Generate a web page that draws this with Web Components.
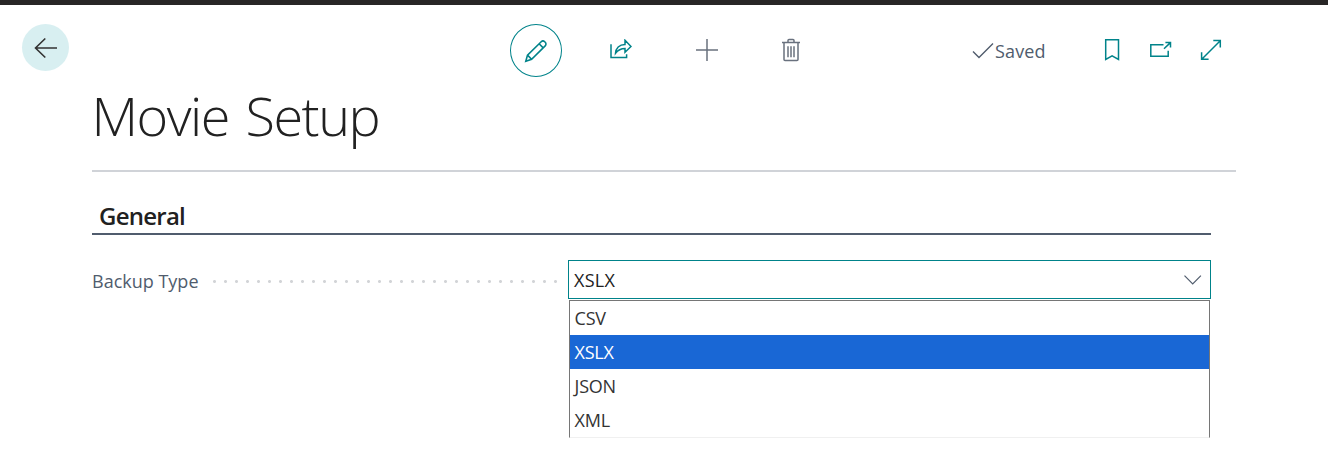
<!DOCTYPE html>
<html lang="en">
<head>
<meta charset="utf-8">
<title>Movie Setup</title>
<style>
html,body{margin:0;height:100%;background:#fff;overflow:hidden}
body{font-family:"Open Sans","Noto Sans",sans-serif;color:#212121}
</style>
</head>
<body>
<setup-page></setup-page>
<script>
const define=(name,html,setup)=>customElements.define(name,class extends HTMLElement{
  connectedCallback(){
    if(this.shadowRoot)return;
    const t=document.createElement('template');t.innerHTML=html;
    this.attachShadow({mode:'open'}).append(t.content.cloneNode(true));
    if(setup)setup(this,this.shadowRoot);
  }
});

const icons={
  back:['24 22','<path d="M11.3 1.5 1.5 11l9.8 9.5M1.8 11H23" stroke-width="1.6"/>'],
  edit:['24 24','<path d="m1.8 22.2 1.7-6.1L17.2 2.7a2.5 2.5 0 0 1 3.5 0l.5.5a2.5 2.5 0 0 1 0 3.6L7.6 20.3zM3.5 16.1l4.1 4.2M15.1 4.8l4.1 4.1" stroke-width="1.6"/>'],
  share:['22 20','<path d="M1 5.2v13.3h15.6v-3.2M5.5 14.4C5.8 9.4 9.2 5.5 15 5.5V1.2l6 6.3-6 5.8V9.6c-4.2 0-7 1.5-9.5 4.8z" stroke-width="1.5"/>'],
  add:['24 24','<path d="M12 1v22M1 12h22" stroke-width="1.5"/>'],
  trash:['20 24','<path d="M1 4.5h18M3 4.5v17q0 1 1 1h12q1 0 1-1v-17M7 4.3V2.5q0-1 1-1h4q1 0 1 1v1.8M7 8.2v11M10 8.2v11M13 8.2v11" stroke-width="1.5"/>'],
  check:['22 18','<path d="m1 9.5 6 6L21 1.5" stroke-width="1.4"/>'],
  bookmark:['16 24','<path d="M1.7 1.8h12.8v19.6l-6.4-3.6-6.4 3.6z" stroke-width="1.5"/>'],
  popout:['24 18','<path d="M14.5 3.7H1.8v11.6h17.4V9.7M15 7.8l5.9-5.7M16.4 1.6h5.1v4.9" stroke-width="1.5"/>'],
  expand:['22 22','<path d="M2 20 20 2M13.3 1.6h7v7M1.6 13.3v7h7" stroke-width="1.5"/>'],
  chevron:['20 12','<path d="m1.5 1.7 8.2 8.2 8.2-8.2" stroke-width="1.2"/>']
};
define('line-icon','<style>:host{display:block;flex:none}svg{display:block;fill:none;stroke:currentColor}</style><svg></svg>',(el,r)=>{
  const [size,paths]=icons[el.getAttribute('name')],[w,h]=size.split(' '),s=r.querySelector('svg');
  s.setAttribute('viewBox','0 0 '+size);s.setAttribute('width',w);s.setAttribute('height',h);s.innerHTML=paths;
});

define('round-button',`<style>:host{display:flex;box-sizing:border-box;flex:none;align-items:center;justify-content:center;border-radius:50%}
:host([kind=back]){width:47px;height:47px;background:#d8eff1;color:#333}
:host([kind=edit]){width:52px;height:53px;border:1px solid #00838a;color:#00838a}</style><slot></slot>`);

define('action-bar',`<style>:host{display:flex;height:87px;box-sizing:border-box;padding:19px 0 0 22px;align-items:flex-start;color:#00838a}
.gray{color:#69717e}.saved{display:flex;align-items:center;color:#505c6d;margin:12px 0 0 171px;height:29px}
.saved span{font-size:18px;line-height:28px;letter-spacing:.15px;margin-left:1px;width:51px}</style>
<round-button kind="back"><line-icon name="back"></line-icon></round-button>
<round-button kind="edit" style="margin-left:441px"><line-icon name="edit"></line-icon></round-button>
<line-icon name="share" style="margin:15px 0 0 48px"></line-icon>
<line-icon class="gray" name="add" style="margin:14px 0 0 63px"></line-icon>
<line-icon class="gray" name="trash" style="margin:14px 0 0 62px"></line-icon>
<div class="saved"><line-icon name="check"></line-icon><span>Saved</span></div>
<line-icon name="bookmark" style="margin:14px 0 0 58px"></line-icon>
<line-icon name="popout" style="margin:17px 0 0 29px"></line-icon>
<line-icon name="expand" style="margin:15px 0 0 27px"></line-icon>`);

define('page-title',`<style>:host{display:block;box-sizing:border-box;width:1144px;height:80px;margin-left:92px;border-bottom:2px solid #d0d3d8}
span{display:block;font-size:54px;font-weight:300;line-height:46px;letter-spacing:-1.5px;word-spacing:4px;text-indent:-.5px;white-space:nowrap}</style><span><slot></slot></span>`);

define('group-heading',`<style>:host{display:block;box-sizing:border-box;width:1119px;height:63px;margin-left:92px;padding:27px 0 0 7px;border-bottom:2px solid #505c6d}
span{font-size:24px;font-weight:600;line-height:33px;display:block;letter-spacing:-.75px}</style><span><slot></slot></span>`);

define('option-item',`<style>:host{display:block;height:34px;line-height:34px;padding-left:4.5px;font-size:18px;color:#333}
:host([selected]){background:#1967d5;color:#fff}span{letter-spacing:-.2px}</style><span><slot></slot></span>`);

define('select-field',`<style>:host{display:block;position:relative;width:643px;height:39px;flex:none}
.box{box-sizing:border-box;height:39px;border:1px solid #00838a;display:flex;align-items:center;justify-content:space-between;padding:0 7px 0 5px;font-size:18px;color:#212121}
.box span{letter-spacing:.3px}line-icon{color:#505c6d}
.menu{position:absolute;left:1px;top:40px;width:641px;height:138px;box-sizing:border-box;background:#fff;border:1px solid #767676;border-bottom-color:#f0f0f0}</style>
<div class="box"><span>XSLX</span><line-icon name="chevron"></line-icon></div>
<div class="menu"><slot></slot></div>`);

define('field-row',`<style>:host{display:flex;margin:25px 0 0 92px;width:1119px;height:39px}
label{width:106px;line-height:43px;font-size:18px;letter-spacing:0;color:#505c6d;white-space:nowrap}
.dots{width:351px;height:3px;margin:20px 4px 0 15px;background:radial-gradient(circle at 1.5px 1.5px,#d2d4d7 0 1.2px,transparent 1.7px) 0 0/11px 3px}</style>
<label>Backup Type</label><div class="dots"></div><slot></slot>`);

define('setup-page',`<style>:host{display:block;border-top:5px solid #282626;height:454px}</style>
<action-bar></action-bar>
<page-title>Movie Setup</page-title>
<group-heading>General</group-heading>
<field-row><select-field>
<option-item>CSV</option-item><option-item selected>XSLX</option-item><option-item>JSON</option-item><option-item>XML</option-item>
</select-field></field-row>`);
</script>
</body>
</html>
